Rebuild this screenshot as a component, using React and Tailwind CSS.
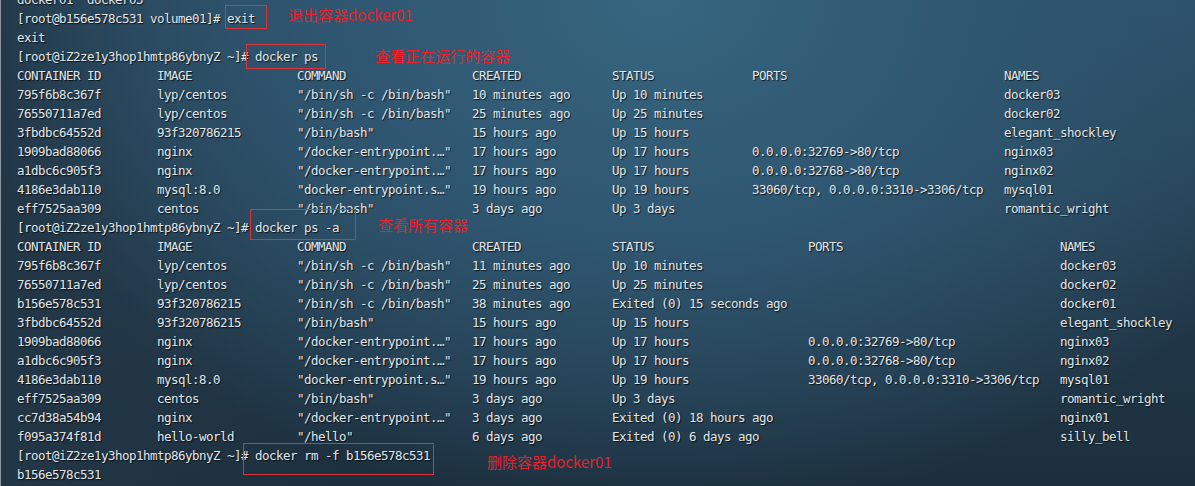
const mono = "font-['DejaVu_Sans_Mono','Liberation_Mono',monospace] text-[12.5px] tracking-[-0.525px]";

const prompt = "[root@iZ2ze1y3hop1hmtp86ybnyZ ~]# ";

const cols1 = [140, 140, 175, 140, 140, 252];
const cols2 = [140, 140, 175, 140, 196, 252];

const head = ["CONTAINER ID", "IMAGE", "COMMAND", "CREATED", "STATUS", "PORTS", "NAMES"];

const ps = [
  ["795f6b8c367f", "lyp/centos", '"/bin/sh -c /bin/bash"', "10 minutes ago", "Up 10 minutes", "", "docker03"],
  ["76550711a7ed", "lyp/centos", '"/bin/sh -c /bin/bash"', "25 minutes ago", "Up 25 minutes", "", "docker02"],
  ["3fbdbc64552d", "93f320786215", '"/bin/bash"', "15 hours ago", "Up 15 hours", "", "elegant_shockley"],
  ["1909bad88066", "nginx", '"/docker-entrypoint.…"', "17 hours ago", "Up 17 hours", "0.0.0.0:32769->80/tcp", "nginx03"],
  ["a1dbc6c905f3", "nginx", '"/docker-entrypoint.…"', "17 hours ago", "Up 17 hours", "0.0.0.0:32768->80/tcp", "nginx02"],
  ["4186e3dab110", "mysql:8.0", '"docker-entrypoint.s…"', "19 hours ago", "Up 19 hours", "33060/tcp, 0.0.0.0:3310->3306/tcp", "mysql01"],
  ["eff7525aa309", "centos", '"/bin/bash"', "3 days ago", "Up 3 days", "", "romantic_wright"],
];

const psAll = [
  ["795f6b8c367f", "lyp/centos", '"/bin/sh -c /bin/bash"', "11 minutes ago", "Up 10 minutes", "", "docker03"],
  ["76550711a7ed", "lyp/centos", '"/bin/sh -c /bin/bash"', "25 minutes ago", "Up 25 minutes", "", "docker02"],
  ["b156e578c531", "93f320786215", '"/bin/sh -c /bin/bash"', "38 minutes ago", "Exited (0) 15 seconds ago", "", "docker01"],
  ["3fbdbc64552d", "93f320786215", '"/bin/bash"', "15 hours ago", "Up 15 hours", "", "elegant_shockley"],
  ["1909bad88066", "nginx", '"/docker-entrypoint.…"', "17 hours ago", "Up 17 hours", "0.0.0.0:32769->80/tcp", "nginx03"],
  ["a1dbc6c905f3", "nginx", '"/docker-entrypoint.…"', "17 hours ago", "Up 17 hours", "0.0.0.0:32768->80/tcp", "nginx02"],
  ["4186e3dab110", "mysql:8.0", '"docker-entrypoint.s…"', "19 hours ago", "Up 19 hours", "33060/tcp, 0.0.0.0:3310->3306/tcp", "mysql01"],
  ["eff7525aa309", "centos", '"/bin/bash"', "3 days ago", "Up 3 days", "", "romantic_wright"],
  ["cc7d38a54b94", "nginx", '"/docker-entrypoint.…"', "3 days ago", "Exited (0) 18 hours ago", "", "nginx01"],
  ["f095a374f81d", "hello-world", '"/hello"', "6 days ago", "Exited (0) 6 days ago", "", "silly_bell"],
];

function Line({ children }) {
  return <div className="h-[19px] leading-[19px] whitespace-pre">{children}</div>;
}

function Row({ cells, widths }) {
  return (
    <div className="flex h-[19px] leading-[19px] whitespace-pre">
      {cells.map((c, i) => (
        <span key={i} className="shrink-0" style={i < widths.length ? { width: widths[i] } : undefined}>
          {c}
        </span>
      ))}
    </div>
  );
}

function Note({ className, children }) {
  return (
    <div
      className={`absolute text-[15px] leading-[19px] text-[#e8212b] whitespace-pre font-['Noto_Sans_CJK_SC','Noto_Sans',sans-serif] ${className}`}
    >
      {children}
    </div>
  );
}

function Box({ className }) {
  return <div className={`absolute border border-[#d8343a] ${className}`} />;
}

export default function App() {
  return (
    <div className="relative w-[1195px] h-[486px] overflow-hidden border-l border-[#8796a0] bg-[#27455a] bg-[radial-gradient(ellipse_at_55%_0%,#37657f_0%,#2f5670_35%,transparent_75%),linear-gradient(to_right,#223646_0%,transparent_30%),linear-gradient(to_bottom,#2c5068_0%,#22394a_60%,#1c2f3d_100%)]">
      <div className={`${mono} text-[#e2e6e9] pl-[16px] -mt-[10px] [text-shadow:1px_1px_1px_rgba(0,0,0,0.75)]`}>
        <Line>docker01  docker03</Line>
        <Line>[root@b156e578c531 volume01]# exit</Line>
        <Line>exit</Line>
        <Line>{prompt}docker ps</Line>
        <Row cells={head} widths={cols1} />
        {ps.map((r, i) => (
          <Row key={i} cells={r} widths={cols1} />
        ))}
        <Line>{prompt}docker ps -a</Line>
        <Row cells={head} widths={cols2} />
        {psAll.map((r, i) => (
          <Row key={i} cells={r} widths={cols2} />
        ))}
        <Line>{prompt}docker rm -f b156e578c531</Line>
        <Line>b156e578c531</Line>
      </div>

      <Box className="left-[224px] top-[5px] w-[42px] h-[24px]" />
      <Box className="left-[245px] top-[44px] w-[80px] h-[25px]" />
      <Box className="left-[249px] top-[209px] w-[106px] h-[31px]" />
      <Box className="left-[242px] top-[443px] w-[191px] h-[32px]" />

      <Note className="left-[287px] top-[5px]">退出容器docker01</Note>
      <Note className="left-[374px] top-[46px]">查看正在运行的容器</Note>
      <Note className="left-[377px] top-[215px]">查看所有容器</Note>
      <Note className="left-[486px] top-[452px]">删除容器docker01</Note>
    </div>
  );
}
